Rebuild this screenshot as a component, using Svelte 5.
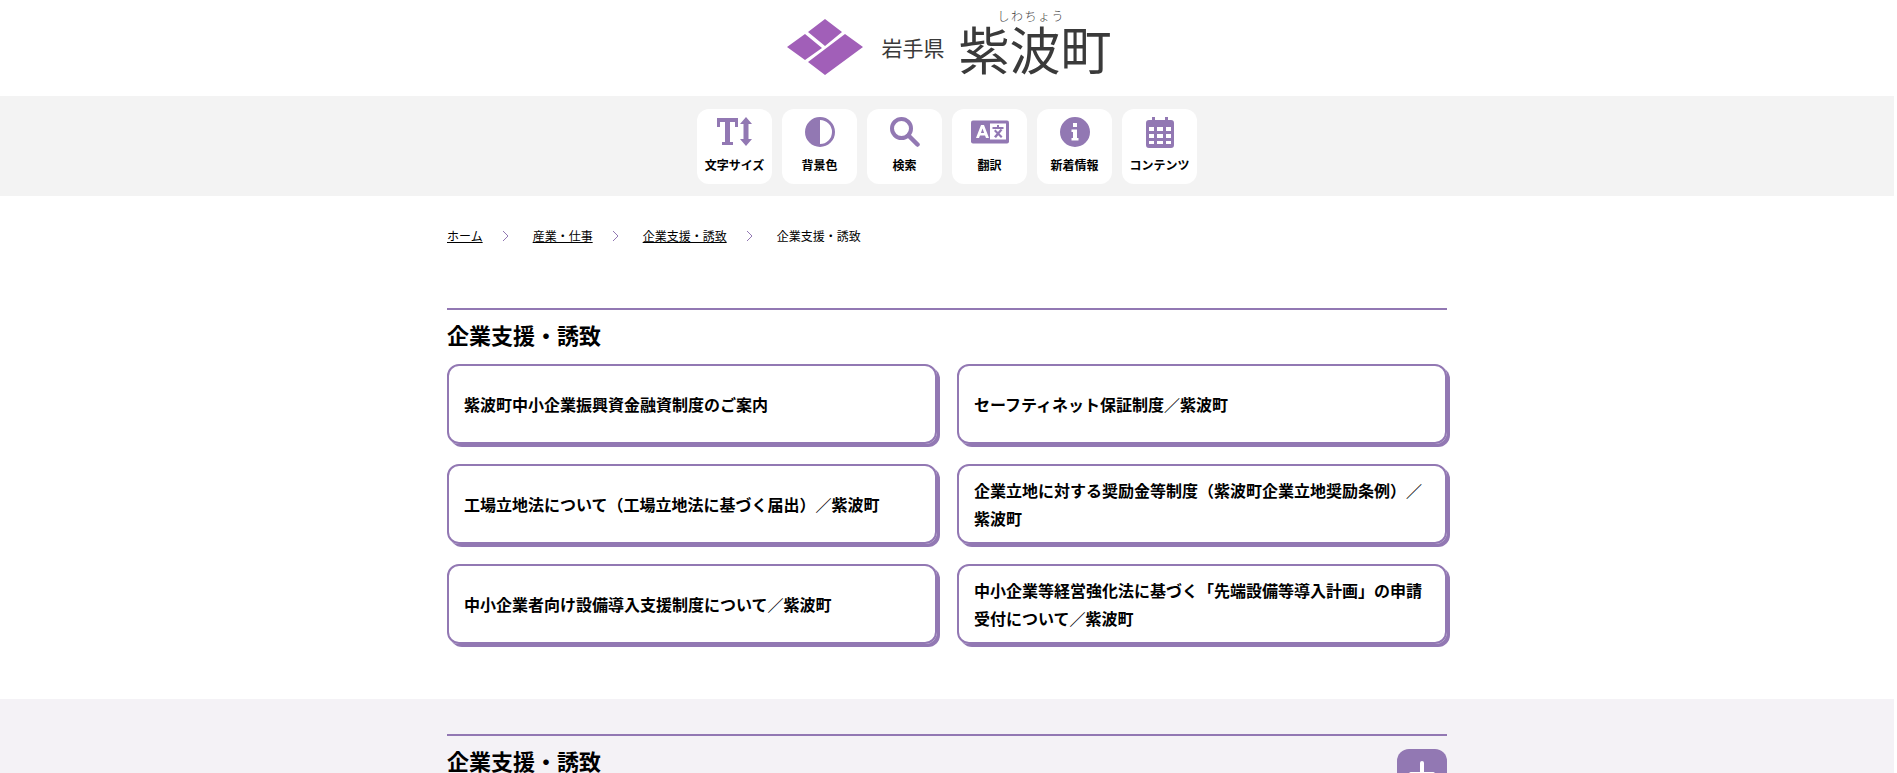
<script>
  const tools = ['文字サイズ', '背景色', '検索', '翻訳', '新着情報', 'コンテンツ'];
  const crumbs = ['ホーム', '産業・仕事', '企業支援・誘致'];
  const links = [
    '紫波町中小企業振興資金融資制度のご案内',
    'セーフティネット保証制度／紫波町',
    '工場立地法について（工場立地法に基づく届出）／紫波町',
    '企業立地に対する奨励金等制度（紫波町企業立地奨励条例）／紫波町',
    '中小企業者向け設備導入支援制度について／紫波町',
    '中小企業等経営強化法に基づく「先端設備等導入計画」の申請受付について／紫波町'
  ];
</script>

<div class="page">
  <header class="site-head">
    <svg class="crest" viewBox="0 0 76 56" width="76" height="56" aria-hidden="true">
      <path d="M38 0 L55 13 L38 27 L21 13 Z M18 15 L35 29 L18 41 L0 28 Z M58 15 L76 28 L38 56 L21 43 Z" fill="#a15fb8" />
    </svg>
    <span class="pref">岩手県</span>
    <span class="town">
      <span class="kana">しわちょう</span>
      紫波町
    </span>
  </header>

  <nav class="tools">
    {#each tools as label, i}
      <button class="tool">
        <span class="tool-icon">
          {#if i === 0}
            <svg viewBox="0 0 36 30" width="36" height="30">
              <path d="M0 1 H21 V10 H18 V5 H13 V25 H16 V28 H5 V25 H8 V5 H3 V10 H0 Z" />
              <path d="M29 0 L35 7 H31.5 V22 H35 L29 29 L23 22 H26.5 V7 H23 Z" />
            </svg>
          {:else if i === 1}
            <svg viewBox="0 0 30 30" width="30" height="30">
              <path fill-rule="evenodd" d="M15 0 A15 15 0 1 1 15 30 A15 15 0 1 1 15 0 Z M15 3 V27 A12 12 0 0 0 15 3 Z" />
            </svg>
          {:else if i === 2}
            <svg viewBox="0 0 30 30" width="30" height="30">
              <circle cx="11.5" cy="11.5" r="9.5" fill="none" stroke="#9278b3" stroke-width="4" />
              <path d="M18.5 18.5 L27.5 27.5" fill="none" stroke="#9278b3" stroke-width="4.5" stroke-linecap="round" />
            </svg>
          {:else if i === 3}
            <svg viewBox="0 0 38 24" width="38" height="24">
              <rect width="38" height="23" y="0.5" rx="2" />
              <rect x="19" y="3.5" width="16" height="16" fill="#fff" />
              <path d="M5 18 L10 5 H13 L18 18 H15 L14 15.5 H9 L8 18 Z M9.9 13 H13.1 L11.5 8.5 Z" fill="#fff" fill-rule="evenodd" />
              <path d="M21.5 7 H32.5 V9 H21.5 Z M26 5 H28 V7 H26 Z M24.5 9.5 L31.5 16.5 L30 18 L23 11 Z M29.5 9 L31.5 10 L25 18 L23 16.5 Z" />
            </svg>
          {:else if i === 4}
            <svg viewBox="0 0 30 30" width="30" height="30">
              <path fill-rule="evenodd" d="M15 0 A15 15 0 1 1 15 30 A15 15 0 1 1 15 0 Z M13 6 V10 H17 V6 Z M11.5 12.5 V15 H13 V21 H11.5 V23.5 H18.5 V21 H17 V12.5 Z" />
            </svg>
          {:else}
            <svg viewBox="0 0 28 31" width="28" height="31">
              <path fill-rule="evenodd" d="M6 0 H9 V3 H19 V0 H22 V3 H25 A3 3 0 0 1 28 6 V28 A3 3 0 0 1 25 31 H3 A3 3 0 0 1 0 28 V6 A3 3 0 0 1 3 3 H6 Z M3 10 V14 H8 V10 Z M11 10 V14 H17 V10 Z M20 10 V14 H25 V10 Z M3 17 V21 H8 V17 Z M11 17 V21 H17 V17 Z M20 17 V21 H25 V17 Z M3 24 V27 H8 V24 Z M11 24 V27 H17 V24 Z M20 24 V27 H25 V24 Z" />
            </svg>
          {/if}
        </span>
        <span class="tool-label">{label}</span>
      </button>
    {/each}
  </nav>

  <main class="wrap">
    <ol class="crumbs">
      {#each crumbs as c}
        <li>
          <a href="#top">{c}</a>
          <svg viewBox="0 0 7 12" width="7" height="12"><path d="M1 1 L6 6 L1 11" fill="none" stroke="#9278b3" stroke-width="1" /></svg>
        </li>
      {/each}
      <li>企業支援・誘致</li>
    </ol>

    <h2 class="section-title">企業支援・誘致</h2>
    <ul class="cards">
      {#each links as text}
        <li><a class="card" href="#top">{text}</a></li>
      {/each}
    </ul>
  </main>

  <section class="lower">
    <div class="wrap">
      <div class="lower-head">
        <h2>企業支援・誘致</h2>
        <button class="plus" aria-label="開く"></button>
      </div>
    </div>
  </section>
</div>

<style>
  :global(body) {
    margin: 0;
    background: #fff;
  }

  .page {
    height: 773px;
    overflow: hidden;
    width: 1894px;
    color: #000;
    font-family: "Noto Sans CJK JP", "Noto Sans", sans-serif;
  }

  .site-head {
    height: 96px;
    display: flex;
    align-items: flex-start;
    justify-content: center;
    color: #3a3a3a;
    padding-left: 5px;
    box-sizing: border-box;
  }

  .crest {
    margin-top: 19px;
    margin-right: 18px;
  }

  .pref {
    font-size: 21px;
    line-height: 30px;
    margin-top: 32px;
    margin-right: 14px;
    font-weight: 400;
  }

  .town {
    position: relative;
    font-size: 51px;
    line-height: 50px;
    margin-top: 23px;
    font-weight: 400;
  }

  .kana {
    position: absolute;
    top: -14px;
    left: 39px;
    font-size: 12px;
    line-height: 14px;
    letter-spacing: 1.5px;
    white-space: nowrap;
    font-weight: 300;
  }

  .tools {
    height: 100px;
    background: #f3f3f3;
    display: flex;
    justify-content: center;
    align-items: center;
    gap: 10px;
  }

  .tool {
    width: 75px;
    height: 75px;
    border: 0;
    border-radius: 12px;
    background: #fff;
    padding: 8px 0 0;
    display: flex;
    flex-direction: column;
    align-items: center;
    font-family: inherit;
    color: #000;
  }

  .tool-icon {
    height: 31px;
    display: flex;
    align-items: center;
    justify-content: center;
  }

  .tool-icon svg {
    fill: #9278b3;
    display: block;
  }

  .tool-label {
    margin-top: 9px;
    font-size: 12px;
    line-height: 16px;
    font-weight: 700;
    white-space: nowrap;
  }

  .wrap {
    width: 1000px;
    margin: 0 auto;
  }

  .crumbs {
    list-style: none;
    margin: 0;
    padding: 30px 0 0;
    display: flex;
    font-size: 12px;
    line-height: 20px;
    height: 82px;
  }

  .crumbs li {
    display: flex;
    align-items: center;
    height: 20px;
  }

  .crumbs a {
    color: #000;
  }

  .crumbs svg {
    margin: 0 24px 0 19px;
  }

  .section-title {
    margin: 0;
    border-top: 2px solid #9278b3;
    padding: 8px 0 14px;
    font-size: 22px;
    line-height: 32px;
    font-weight: 700;
  }

  .cards {
    list-style: none;
    margin: 0;
    padding: 0;
    display: grid;
    grid-template-columns: 490px 490px;
    gap: 20px 20px;
  }

  .card {
    box-sizing: border-box;
    height: 80px;
    display: flex;
    align-items: center;
    padding: 0 15px;
    border: 2px solid #9278b3;
    border-radius: 12px;
    box-shadow: 3px 3px 0 #9278b3;
    color: #000;
    text-decoration: none;
    font-size: 16px;
    line-height: 28px;
    font-weight: 700;
  }

  .lower {
    margin-top: 55px;
    background: #f4f2f6;
    padding-top: 35px;
    height: 200px;
  }

  .lower-head {
    border-top: 2px solid #9278b3;
    display: flex;
    justify-content: space-between;
    align-items: flex-start;
    padding-top: 8px;
  }

  .lower-head h2 {
    margin: 0;
    font-size: 22px;
    line-height: 32px;
    font-weight: 700;
  }

  .plus {
    position: relative;
    width: 50px;
    height: 50px;
    margin-top: 5px;
    border: 0;
    border-radius: 12px;
    background: #9278b3;
    padding: 0;
  }

  .plus::before,
  .plus::after {
    content: "";
    position: absolute;
    background: #fff;
    border-radius: 2px;
  }

  .plus::before {
    left: 23px;
    top: 12px;
    width: 4px;
    height: 26px;
  }

  .plus::after {
    left: 12px;
    top: 23px;
    width: 26px;
    height: 4px;
  }
</style>
